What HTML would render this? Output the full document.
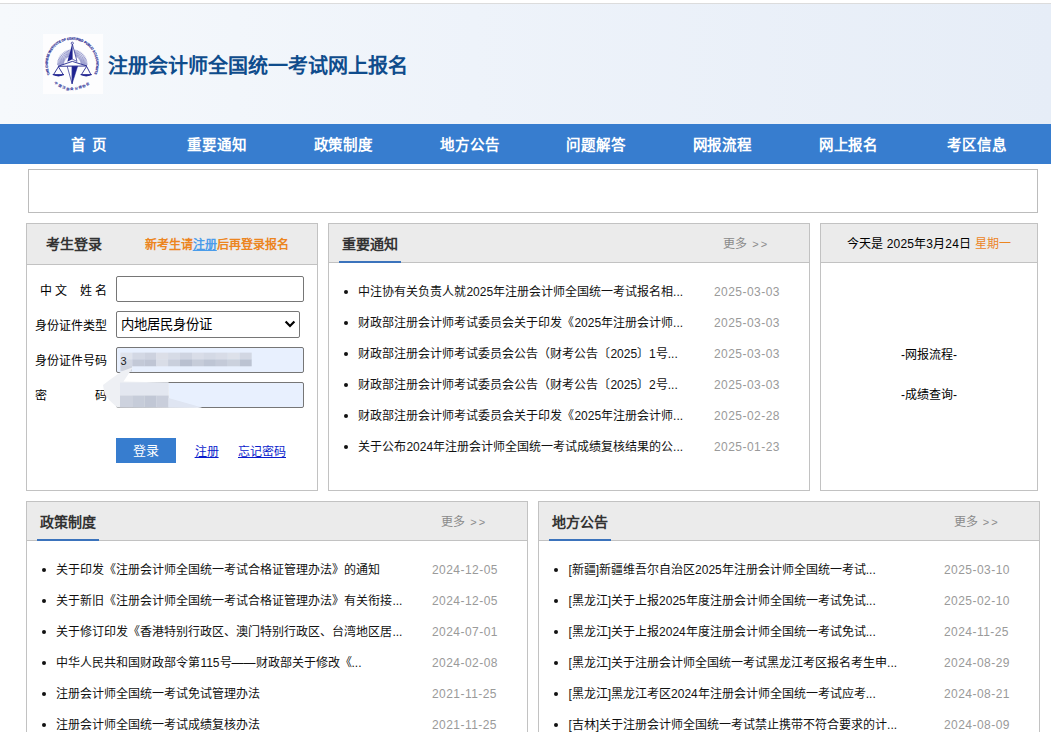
<!DOCTYPE html>
<html lang="zh-CN">
<head>
<meta charset="utf-8">
<title>注册会计师全国统一考试网上报名</title>
<style>
*{box-sizing:border-box;margin:0;padding:0}
html,body{width:1051px;height:732px;overflow:hidden;background:#fff}
body{position:relative;font-family:"Liberation Sans",sans-serif;font-size:12px;color:#000}
.abs{position:absolute}
#topline{left:0;top:3px;width:1051px;height:1px;background:#dcdcdc}
#header{left:0;top:4px;width:1051px;height:120px;background:linear-gradient(90deg,#f6f9fc 0%,#eef3fa 45%,#e6edf7 100%)}
#logo{left:43px;top:34px;width:60px;height:60px;background:#fdfdfe}
#title{left:107.5px;top:51px;height:30px;line-height:30px;font-size:20px;font-weight:bold;color:#0f4c8c;white-space:nowrap}
#nav{left:0;top:124px;width:1051px;height:40px;background:#377dcf}
#nav span{position:absolute;top:1px;height:40px;line-height:40px;width:100px;margin-left:-49.5px;text-align:center;color:#fff;font-size:14.5px;letter-spacing:0.8px;font-weight:bold;white-space:nowrap}
#banner{left:28px;top:169px;width:1010px;height:44px;border:1px solid #bcbcbc;background:#fff}
.panel{border:1px solid #c2c2c2;background:#fff}
.phead{position:absolute;left:0;top:0;right:0;background:#ebebeb;border-bottom:1px solid #c2c2c2}
.ptitle{position:absolute;font-size:14px;font-weight:bold;color:#333;white-space:nowrap}
.uline{position:absolute;height:2px;background:#3b73bc}
.more{position:absolute;color:#8a8a8a;font-size:12px;white-space:nowrap}
.gg{font-size:11px;letter-spacing:2.3px;margin-left:1.8px;position:relative;top:0.3px}
ul.list{position:absolute;list-style:none}
ul.list li{position:absolute;left:0;height:31px;line-height:31px;white-space:nowrap;font-size:12px;color:#111}
ul.list li i{position:absolute;left:-1.2px;top:12.8px;width:4.4px;height:4.4px;border-radius:2.2px;background:#111}
ul.list li span.t{position:absolute;left:13.4px;top:0}
ul.list li span.d{position:absolute;top:0;color:#9a9a9a;font-size:12px;letter-spacing:0.45px}
.lbl{position:absolute;font-size:12px;color:#000;white-space:nowrap;height:25px;line-height:25px}
.inp{position:absolute;border:1px solid #767676;border-radius:2px;background:#fff}
a.lk{position:absolute;color:#0a1ccc;text-decoration:underline;font-size:12px;white-space:nowrap}
</style>
</head>
<body>
<div id="topline" class="abs"></div>
<div id="header" class="abs"></div>
<div id="logo" class="abs">
<svg width="60" height="60" viewBox="0 0 60 60">
<defs><path id="arcT" d="M7.07 40.46 A24.3 24.3 0 1 1 50.93 40.46"/><path id="arcB" d="M11.3 49.4 A26.2 26.2 0 0 0 47.2 48.9"/></defs>
<text font-family="Liberation Sans, sans-serif" font-size="3.3" font-weight="bold" fill="#33389a" stroke="#33389a" stroke-width="0.22"><textPath href="#arcT" textLength="97" lengthAdjust="spacingAndGlyphs">THE CHINESE INSTITUTE OF CERTIFIED PUBLIC ACCOUNTANTS</textPath></text>
<text font-family="Liberation Sans, sans-serif" font-size="3.4" font-weight="bold" fill="#2b2f96"><textPath href="#arcB" textLength="38" lengthAdjust="spacing">中国注册会计师协会</textPath></text>
<path d="M20.80 30.60L14.10 30.60M20.83 29.86L14.16 29.28M20.93 29.12L14.33 27.96M21.09 28.40L14.62 26.67M21.31 27.69L15.02 25.40M21.60 27.01L15.52 24.18M21.94 26.35L16.14 23.00M22.34 25.72L16.85 21.88M22.79 25.14L17.66 20.83M23.29 24.59L18.55 19.85M23.84 24.09L19.53 18.96M24.42 23.64L20.58 18.15M25.05 23.24L21.70 17.44M25.71 22.90L22.88 16.82M26.39 22.61L24.10 16.32M27.10 22.39L25.37 15.92M27.82 22.23L26.66 15.63M28.56 22.13L27.98 15.46M29.30 22.10L29.30 15.40M30.04 22.13L30.62 15.46M30.78 22.23L31.94 15.63M31.50 22.39L33.23 15.92M32.21 22.61L34.50 16.32M32.89 22.90L35.72 16.82M33.55 23.24L36.90 17.44M34.18 23.64L38.02 18.15M34.76 24.09L39.07 18.96M35.31 24.59L40.05 19.85M35.81 25.14L40.94 20.83M36.26 25.72L41.75 21.88M36.66 26.35L42.46 23.00M37.00 27.01L43.08 24.18M37.29 27.69L43.58 25.40M37.51 28.40L43.98 26.67M37.67 29.12L44.27 27.96M37.77 29.86L44.44 29.28M37.80 30.60L44.50 30.60" stroke="#3a3fa2" stroke-width="0.55" fill="none" opacity="0.9"/>
<path d="M29.3 10 L33.6 27.2 L29.3 31 L24.9 27.2 Z" fill="#fff"/>
<path d="M15 32.3 L29.3 27.4 L44 32 Z" fill="#fff" stroke="#23278f" stroke-width="0.9" stroke-linejoin="round"/>
<path d="M29.3 9.8 L24.3 27.8 L29.3 25.2 Z" fill="#1f2390"/>
<path d="M29.3 9.8 L34 27.4 L29.3 25.2 Z" fill="#fff" stroke="#23278f" stroke-width="0.7" stroke-linejoin="round"/>
<circle cx="29.3" cy="9.2" r="1.1" fill="#fff" stroke="#23278f" stroke-width="0.7"/>
<path d="M24.2 32.3 L29.1 49.8 L29.3 32.3 Z" fill="#fff" stroke="#23278f" stroke-width="0.7" stroke-linejoin="round"/>
<path d="M29.1 32.3 L34.6 32.3 L29.1 49.8 Z" fill="#1f2390" stroke="#1f2390" stroke-width="0.5" stroke-linejoin="round"/>
<path d="M15.4 32.8 L10.4 40.8 M15.4 32.8 L20.4 40.8 M43.6 32.4 L38.3 40.8 M43.6 32.4 L48 40.8" stroke="#23278f" stroke-width="0.9" fill="none"/>
<path d="M9.8 40.6 H21 Q15.4 43.6 9.8 40.6 Z M37.7 40.6 H48.6 Q43.2 43.6 37.7 40.6 Z" fill="#1f2390" stroke="#1f2390" stroke-width="0.8"/>
</svg>
</div>
<div id="title" class="abs">注册会计师全国统一考试网上报名</div>
<div id="nav" class="abs">
<span style="left:88.5px;word-spacing:1.5px">首 页</span>
<span style="left:216.5px">重要通知</span>
<span style="left:342.7px">政策制度</span>
<span style="left:469.3px">地方公告</span>
<span style="left:595.6px">问题解答</span>
<span style="left:721.7px">网报流程</span>
<span style="left:847.9px">网上报名</span>
<span style="left:976.6px">考区信息</span>
</div>
<div id="banner" class="abs"></div>

<!-- login panel -->
<div class="abs panel" style="left:26px;top:223px;width:292px;height:268px">
  <div class="phead" style="height:41px"></div>
  <div class="ptitle" style="left:19px;top:0;line-height:41px">考生登录</div>
  <div class="abs" style="left:117.5px;top:0.5px;line-height:41px;font-size:12px;letter-spacing:0.05px;font-weight:bold;color:#ec851f;white-space:nowrap">新考生请<span style="color:#4a9cea;text-decoration:underline">注册</span>后再登录报名</div>
  <div class="lbl" style="left:13px;top:55px">中</div><div class="lbl" style="left:28px;top:55px">文</div><div class="lbl" style="left:53px;top:55px">姓</div><div class="lbl" style="left:68px;top:55px">名</div>
  <div class="inp" style="left:89px;top:52px;width:188px;height:26px"></div>
  <div class="lbl" style="left:8px;top:90px">身份证件类型</div>
  <div class="inp" style="left:89px;top:87px;width:184px;height:27px"></div>
  <div class="abs" style="left:94px;top:87px;line-height:27px;font-size:13.33px;white-space:nowrap">内地居民身份证</div>
  <svg class="abs" style="left:257.2px;top:96px" width="12" height="9" viewBox="0 0 12 9"><path d="M1.6 1.5 L6 6 L10.4 1.5" fill="none" stroke="#000" stroke-width="2.2"/></svg>
  <div class="lbl" style="left:8px;top:125px">身份证件号码</div>
  <div class="inp" style="left:89px;top:123px;width:188px;height:26px;background:#e8f0fe"></div>
  <div class="lbl" style="left:8px;top:160px">密</div>
  <div class="lbl" style="left:68px;top:160px">码</div>
  <div class="inp" style="left:89px;top:158px;width:188px;height:26px;background:#e8f0fe"></div>
  <svg class="abs" style="left:63px;top:116px" width="220" height="75" viewBox="0 0 220 75">
<defs><filter id="bl" x="-5%" y="-20%" width="110%" height="140%"><feGaussianBlur stdDeviation="0.7"/></filter></defs>
<g filter="url(#bl)">
<rect x="30.4" y="12.6" width="12" height="7" fill="#dfe3ec"/><rect x="30.4" y="19.4" width="12" height="6.9" fill="#d3d8e3"/><rect x="42.3" y="12.6" width="12" height="7" fill="#d3d8e4"/><rect x="42.3" y="19.4" width="12" height="6.9" fill="#c3c9d7"/><rect x="54.3" y="12.6" width="12" height="7" fill="#cdd2df"/><rect x="54.3" y="19.4" width="12" height="6.9" fill="#bfc5d4"/><rect x="66.2" y="12.6" width="12" height="7" fill="#dcdfe8"/><rect x="66.2" y="19.4" width="12" height="6.9" fill="#d9dde7"/><rect x="78.1" y="12.6" width="12" height="7" fill="#d6dbe6"/><rect x="78.1" y="19.4" width="12" height="6.9" fill="#c9cfdc"/><rect x="90.0" y="12.6" width="12" height="7" fill="#cfd4e1"/><rect x="90.0" y="19.4" width="12" height="6.9" fill="#b9c0d0"/><rect x="102.0" y="12.6" width="12" height="7" fill="#d9dde8"/><rect x="102.0" y="19.4" width="12" height="6.9" fill="#c6ccd9"/><rect x="113.9" y="12.6" width="12" height="7" fill="#d4d9e5"/><rect x="113.9" y="19.4" width="12" height="6.9" fill="#bec5d4"/><rect x="125.8" y="12.6" width="12" height="7" fill="#d8dce7"/><rect x="125.8" y="19.4" width="12" height="6.9" fill="#c4cad8"/><rect x="137.8" y="12.6" width="12" height="7" fill="#dde1ea"/><rect x="137.8" y="19.4" width="12" height="6.9" fill="#cbd1dd"/><rect x="149.7" y="12.6" width="12" height="7" fill="#d2d7e3"/><rect x="149.7" y="19.4" width="12" height="6.9" fill="#bcc3d2"/>
<rect x="30.4" y="26" width="11.6" height="5.4" fill="#cfd4df"/>
<polygon points="42.9,27.2 31.4,31.4 19.9,39.8 13,45 14.7,54.4 19.9,60.7 27.2,67.6 112,68 79.5,59.7 78.5,42.4 67,42.2 33.5,41.5" fill="#eef0f4"/>
<polygon points="30,42.6 78.5,42.6 78.5,55.5 30,55.5" fill="#e3e7f0"/>
<rect x="30" y="55.5" width="12.2" height="11.8" fill="#cdd2de"/>
<rect x="42.2" y="55.5" width="12.2" height="11.8" fill="#c6ccd9"/>
<rect x="54.4" y="55.5" width="12.2" height="11.8" fill="#c1c7d5"/>
<rect x="66.6" y="55.5" width="12" height="11.8" fill="#c9cedb"/>
<polygon points="78.5,58 112,67.6 78.5,67.6" fill="#dfe5f2"/>
</g>
</svg>
  <div class="abs" style="left:93.5px;top:124px;line-height:26px;font-size:11px;color:#222">3</div>
  <div class="abs" style="left:89px;top:214px;width:60px;height:25px;background:#377dcf;color:#fff;text-align:center;line-height:25px;font-size:13px">登录</div>
  <a class="lk" style="left:167.6px;top:216.4px;line-height:25px">注册</a>
  <a class="lk" style="left:211px;top:216.4px;line-height:25px">忘记密码</a>
</div>

<!-- notices -->
<div class="abs panel" style="left:328px;top:223px;width:482px;height:268px">
  <div class="phead" style="height:39px"></div>
  <div class="ptitle" style="left:13px;top:0;line-height:41px">重要通知</div>
  <div class="uline" style="left:10px;top:37px;width:62px"></div>
  <div class="more" style="left:394px;top:0;line-height:40px">更多 <span class="gg">&gt;&gt;</span></div>
  <ul class="list" style="left:16px;top:53px">
    <li style="top:0"><i></i><span class="t">中注协有关负责人就2025年注册会计师全国统一考试报名相...</span><span class="d" style="left:369px">2025-03-03</span></li>
    <li style="top:31px"><i></i><span class="t">财政部注册会计师考试委员会关于印发《2025年注册会计师...</span><span class="d" style="left:369px">2025-03-03</span></li>
    <li style="top:62px"><i></i><span class="t">财政部注册会计师考试委员会公告（财考公告〔2025〕1号...</span><span class="d" style="left:369px">2025-03-03</span></li>
    <li style="top:93px"><i></i><span class="t">财政部注册会计师考试委员会公告（财考公告〔2025〕2号...</span><span class="d" style="left:369px">2025-03-03</span></li>
    <li style="top:124px"><i></i><span class="t">财政部注册会计师考试委员会关于印发《2025年注册会计师...</span><span class="d" style="left:369px">2025-02-28</span></li>
    <li style="top:155px"><i></i><span class="t">关于公布2024年注册会计师全国统一考试成绩复核结果的公...</span><span class="d" style="left:369px">2025-01-23</span></li>
  </ul>
</div>

<!-- date panel -->
<div class="abs panel" style="left:820px;top:223px;width:218px;height:268px">
  <div class="phead" style="height:39px"></div>
  <div class="abs" style="left:0;top:0;width:216px;text-align:center;line-height:40px;font-size:12px;letter-spacing:0.17px;white-space:nowrap">今天是 2025年3月24日 <span style="color:#ec851f">星期一</span></div>
  <div class="abs" style="left:0;top:121px;width:216px;text-align:center;line-height:20px;font-size:12px">-网报流程-</div>
  <div class="abs" style="left:0;top:161px;width:216px;text-align:center;line-height:20px;font-size:12px">-成绩查询-</div>
</div>

<!-- policy -->
<div class="abs panel" style="left:26px;top:501px;width:502px;height:260px">
  <div class="phead" style="height:39px"></div>
  <div class="ptitle" style="left:13px;top:0;line-height:41px">政策制度</div>
  <div class="uline" style="left:10px;top:37px;width:62px"></div>
  <div class="more" style="left:414px;top:0;line-height:40px">更多 <span class="gg">&gt;&gt;</span></div>
  <ul class="list" style="left:16px;top:53px">
    <li style="top:0"><i></i><span class="t">关于印发《注册会计师全国统一考试合格证管理办法》的通知</span><span class="d" style="left:389px">2024-12-05</span></li>
    <li style="top:31px"><i></i><span class="t">关于新旧《注册会计师全国统一考试合格证管理办法》有关衔接...</span><span class="d" style="left:389px">2024-12-05</span></li>
    <li style="top:62px"><i></i><span class="t">关于修订印发《香港特别行政区、澳门特别行政区、台湾地区居...</span><span class="d" style="left:389px">2024-07-01</span></li>
    <li style="top:93px"><i></i><span class="t">中华人民共和国财政部令第115号——财政部关于修改《...</span><span class="d" style="left:389px">2024-02-08</span></li>
    <li style="top:124px"><i></i><span class="t">注册会计师全国统一考试免试管理办法</span><span class="d" style="left:389px">2021-11-25</span></li>
    <li style="top:155px"><i></i><span class="t">注册会计师全国统一考试成绩复核办法</span><span class="d" style="left:389px">2021-11-25</span></li>
  </ul>
</div>

<!-- local -->
<div class="abs panel" style="left:538px;top:501px;width:502px;height:260px">
  <div class="phead" style="height:39px"></div>
  <div class="ptitle" style="left:13px;top:0;line-height:41px">地方公告</div>
  <div class="uline" style="left:10px;top:37px;width:62px"></div>
  <div class="more" style="left:414.5px;top:0;line-height:40px">更多 <span class="gg">&gt;&gt;</span></div>
  <ul class="list" style="left:16px;top:53px">
    <li style="top:0"><i></i><span class="t">[新疆]新疆维吾尔自治区2025年注册会计师全国统一考试...</span><span class="d" style="left:389px">2025-03-10</span></li>
    <li style="top:31px"><i></i><span class="t">[黑龙江]关于上报2025年度注册会计师全国统一考试免试...</span><span class="d" style="left:389px">2025-02-10</span></li>
    <li style="top:62px"><i></i><span class="t">[黑龙江]关于上报2024年度注册会计师全国统一考试免试...</span><span class="d" style="left:389px">2024-11-25</span></li>
    <li style="top:93px"><i></i><span class="t">[黑龙江]关于注册会计师全国统一考试黑龙江考区报名考生申...</span><span class="d" style="left:389px">2024-08-29</span></li>
    <li style="top:124px"><i></i><span class="t">[黑龙江]黑龙江考区2024年注册会计师全国统一考试应考...</span><span class="d" style="left:389px">2024-08-21</span></li>
    <li style="top:155px"><i></i><span class="t">[吉林]关于注册会计师全国统一考试禁止携带不符合要求的计...</span><span class="d" style="left:389px">2024-08-09</span></li>
  </ul>
</div>
</body>
</html>
